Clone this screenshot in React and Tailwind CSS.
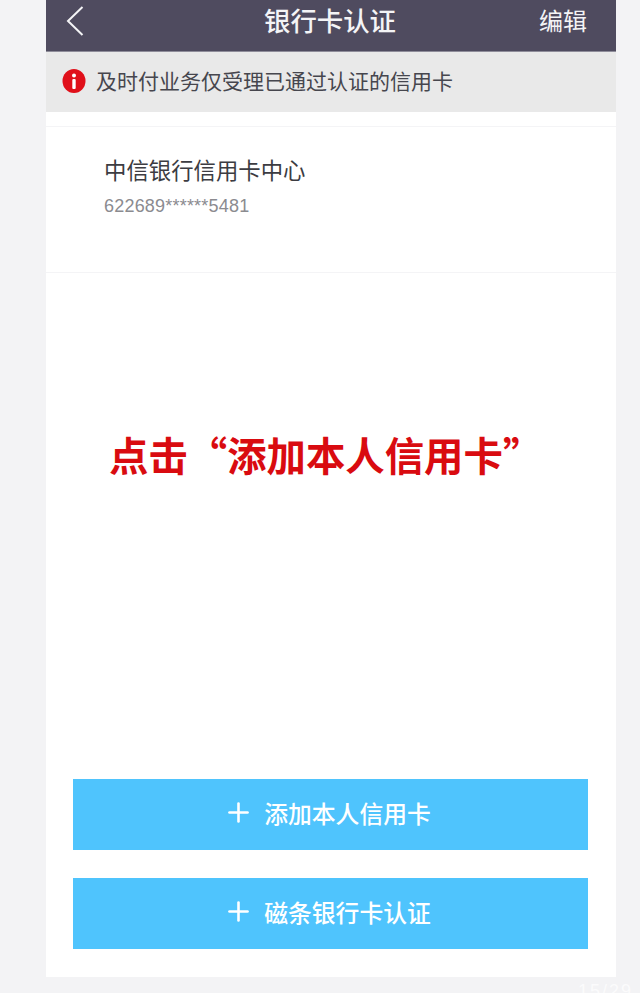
import { Plus } from 'lucide-react';

const cjk = { fontFamily: '"Noto Sans CJK SC", "Liberation Sans", sans-serif' };

function AddButton({ label }) {
  return (
    <button className="h-[71px] w-full bg-[#4fc4fd] text-white flex items-center justify-center gap-[10px] text-[23.8px] font-medium pr-[7px] pb-[4px]">
      <Plus size={31} strokeWidth={2} />
      <span>{label}</span>
    </button>
  );
}

export default function App() {
  return (
    <div style={cjk} className="relative h-[993px] w-[640px] overflow-hidden bg-[#f3f3f5] pl-[46px] pr-[24px]">
      <div className="flex h-[977px] flex-col bg-white">
        {/* header */}
        <div className="flex h-[52px] items-center justify-between bg-[#4f4b5f] pb-[12px] pl-[20px] pr-[29px] text-[#f4f4f6] border-b border-[#8f8d9a]">
          <svg className="mt-[3px]" width="18" height="30" viewBox="0 0 18 30" fill="none" stroke="currentColor" strokeWidth="2">
            <polyline points="16.5,1 2,15 16.5,29" />
          </svg>
          <span className="text-[26.4px] font-medium ml-[37px]">银行卡认证</span>
          <span className="text-[24px]">编辑</span>
        </div>

        {/* notice */}
        <div className="flex h-[60px] items-center gap-[10px] bg-[#e9e9e9] pl-[16px] pb-[2px] text-[21px] text-[#46464e]">
          <svg width="24" height="24" viewBox="0 0 24 24">
            <ellipse cx="12" cy="12" rx="11.5" ry="12" fill="#e0101a" />
            <circle cx="12" cy="6.5" r="2" fill="#fff" />
            <rect x="10.3" y="10" width="3.4" height="10" rx="1" fill="#fff" />
          </svg>
          <span>及时付业务仅受理已通过认证的信用卡</span>
        </div>

        {/* card */}
        <div className="mt-[14px] h-[147px] border-y border-[#f4f4f6] pl-[58px] pt-[24px]">
          <p className="text-[22.4px] leading-[36px] text-[#3c3c42]">中信银行信用卡中心</p>
          <p className="mt-[7px] text-[18px] leading-[24px] tracking-[0.2px] text-[#8b8b90]" style={{ fontFamily: '"Liberation Sans", sans-serif' }}>
            622689******5481
          </p>
        </div>

        {/* hint */}
        <p className="mt-[154px] pl-[63px] text-[39.4px] font-bold leading-[54px] text-[#d90b10] whitespace-nowrap [text-spacing-trim:space-all]">
          点击“添加本人信用卡”
        </p>

        {/* buttons */}
        <div className="mt-auto flex flex-col gap-[28px] pb-[28px] pl-[27px] pr-[28px]">
          <AddButton label="添加本人信用卡" />
          <AddButton label="磁条银行卡认证" />
        </div>
      </div>

      {/* page counter overlay */}
      <span className="absolute left-[578px] top-[978px] text-[18px] tracking-[2px] text-white opacity-70 whitespace-nowrap" style={{ fontFamily: '"Liberation Sans", sans-serif' }}>
        15/29
      </span>
    </div>
  );
}
